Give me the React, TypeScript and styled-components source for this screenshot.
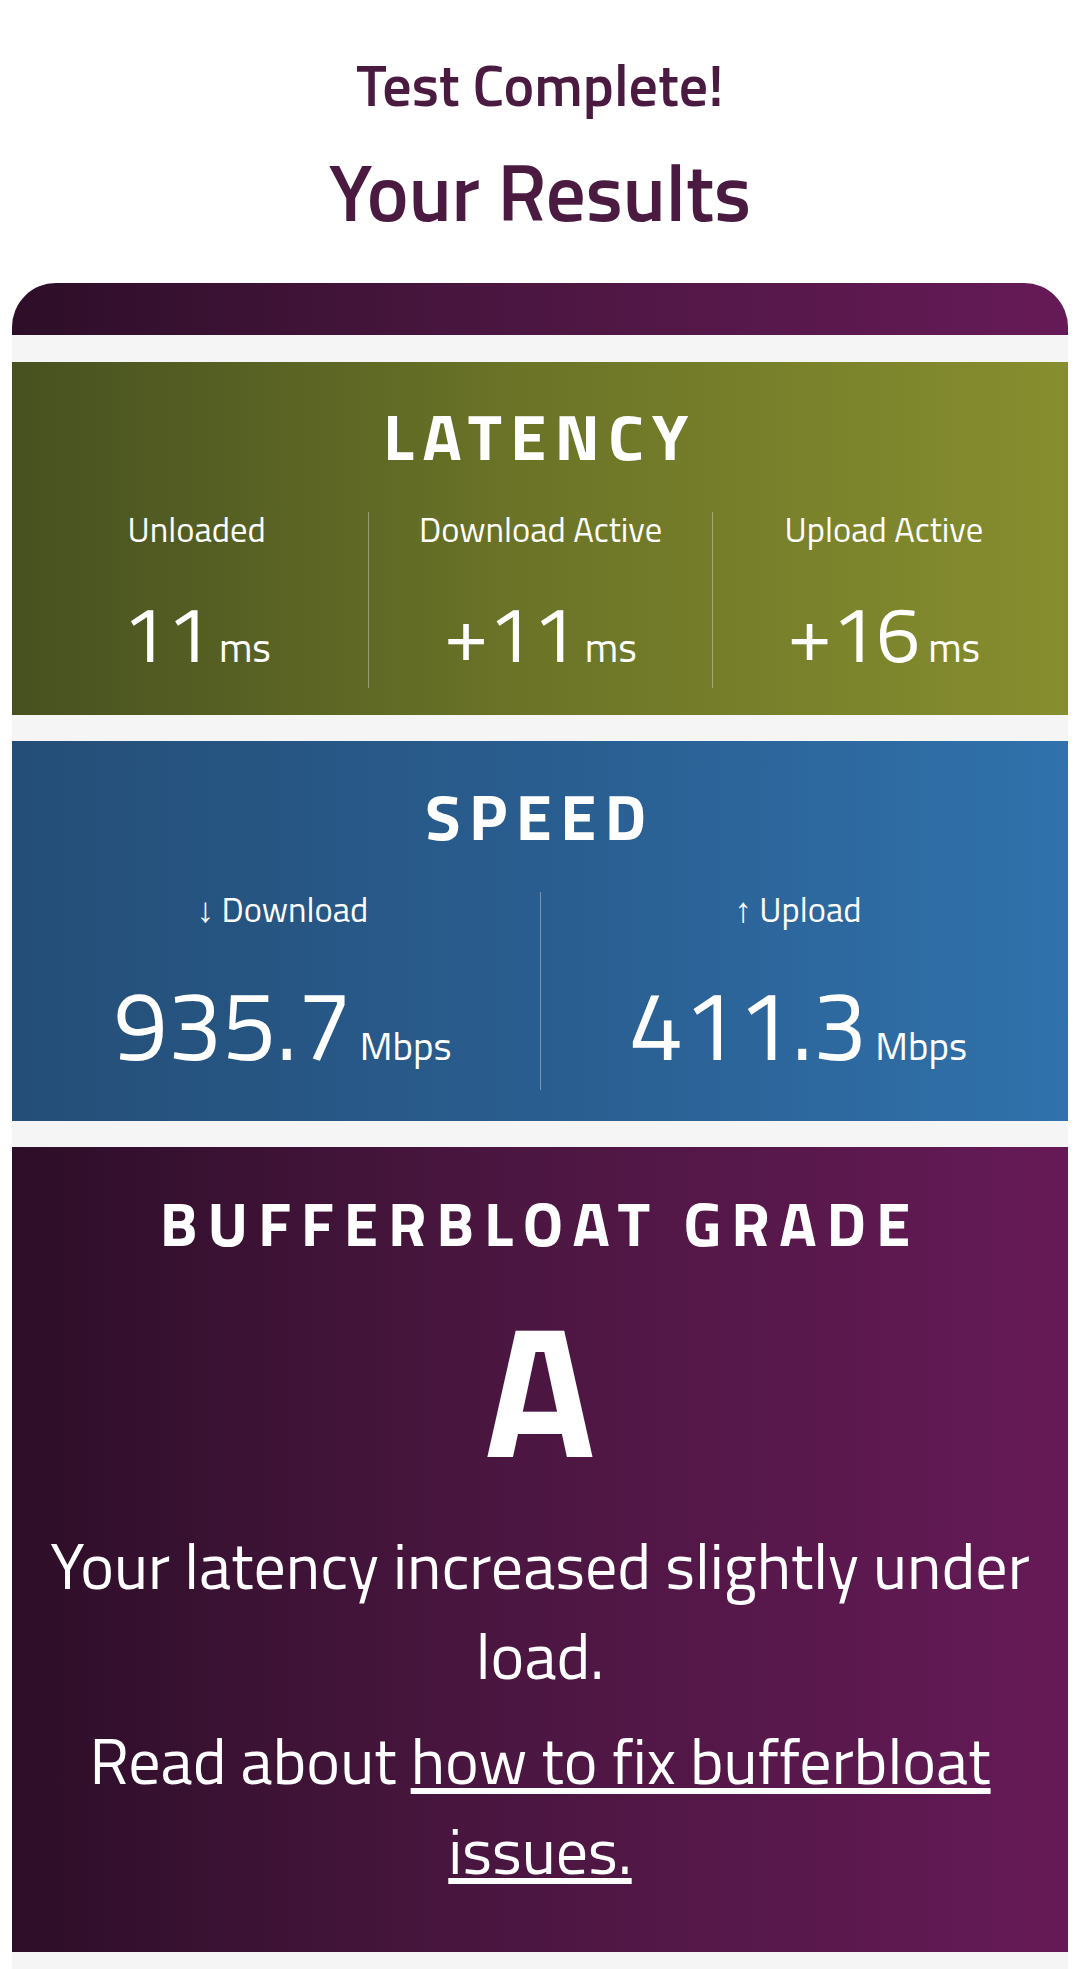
import styled, { createGlobalStyle } from "styled-components";

const Global = createGlobalStyle`
  body {
    margin: 0;
    background: #fff;
    font-family: "Titillium Web", "Open Sans", sans-serif;
    color: #fff;
  }
`;

const tones = {
  grape: "linear-gradient(90deg, #2d0e28 0%, #4a1640 45%, #661a57 100%)",
  olive: "linear-gradient(90deg, #475120 0%, #6c7527 50%, #878e2f 100%)",
  ocean: "linear-gradient(90deg, #244e77 0%, #2a5f92 55%, #3072ac 100%)",
};

type Tone = keyof typeof tones;

const Page = styled.main`
  padding: 56px 12px 0;
`;

const Kicker = styled.h2`
  margin: 0;
  text-align: center;
  color: #4a1a40;
  font-size: 58px;
  font-weight: 600;
  line-height: 1;
`;

const Title = styled.h1`
  margin: 38px 0 0;
  text-align: center;
  color: #4a1a40;
  font-size: 79px;
  font-weight: 600;
  line-height: 1;
`;

const Card = styled.div`
  margin-top: 52px;
  background: #f5f5f5;
  border-radius: 44px 44px 0 0;
  overflow: hidden;
  padding-bottom: 30px;
  display: flex;
  flex-direction: column;
  gap: 26px;
`;

const TopBar = styled.div`
  height: 52px;
  background: ${tones.grape};
  margin-bottom: 1px;
`;

const Section = styled.section<{ $tone: Tone; $top?: number; $bottom?: number }>`
  background: ${(p) => tones[p.$tone]};
  padding: ${(p) => p.$top ?? 41}px 13px ${(p) => p.$bottom ?? 27}px;
  text-align: center;
`;

const SectionTitle = styled.h3<{ $size?: number; $track?: number }>`
  margin: 0;
  font-size: ${(p) => p.$size ?? 65}px;
  font-weight: 700;
  line-height: 1;
  letter-spacing: ${(p) => p.$track ?? 0.13}em;
  text-transform: uppercase;
`;

const Stats = styled.div<{ $cols: number }>`
  display: grid;
  grid-template-columns: repeat(${(p) => p.$cols}, 1fr);
  margin-top: 44px;
`;

const Stat = styled.div`
  padding-bottom: 8px;
  & + & {
    border-left: 1px solid rgba(255, 255, 255, 0.35);
  }
`;

const StatLabel = styled.div`
  font-size: 34.5px;
  line-height: 1;
`;

const StatValue = styled.div<{ $size: number }>`
  margin-top: 39px;
  font-size: ${(p) => p.$size}px;
  line-height: 1.2;
  white-space: nowrap;
`;

const Unit = styled.span<{ $size: number }>`
  font-size: ${(p) => p.$size}px;
  margin-left: 8px;
`;

const Grade = styled.div`
  margin-top: 42px;
  font-size: 185px;
  font-weight: 700;
  line-height: 1;
`;

const Note = styled.p`
  margin: 0;
  padding: 0 8px;
  font-size: 64px;
  line-height: 90px;
  & + & {
    margin-top: 15px;
  }
`;

const Lead = styled(Note)`
  margin-top: 39px;
`;

const FixLink = styled.a`
  color: #fff;
  text-decoration: underline;
  text-decoration-thickness: 6px;
  text-underline-offset: 4px;
`;

const latency = [
  { label: "Unloaded", value: "11" },
  { label: "Download Active", value: "+11" },
  { label: "Upload Active", value: "+16" },
];

const speed = [
  { label: "↓ Download", value: "935.7" },
  { label: "↑ Upload", value: "411.3" },
];

export default function App() {
  return (
    <>
      <Global />
      <Page>
        <Kicker>Test Complete!</Kicker>
        <Title>Your Results</Title>
        <Card>
          <TopBar />
          <Section $tone="olive">
            <SectionTitle>Latency</SectionTitle>
            <Stats $cols={3}>
              {latency.map((s) => (
                <Stat key={s.label}>
                  <StatLabel>{s.label}</StatLabel>
                  <StatValue $size={79}>
                    {s.value}
                    <Unit $size={40}>ms</Unit>
                  </StatValue>
                </Stat>
              ))}
            </Stats>
          </Section>
          <Section $tone="ocean" $top={42} $bottom={31}>
            <SectionTitle>Speed</SectionTitle>
            <Stats $cols={2}>
              {speed.map((s) => (
                <Stat key={s.label}>
                  <StatLabel>{s.label}</StatLabel>
                  <StatValue $size={97}>
                    {s.value}
                    <Unit $size={39}>Mbps</Unit>
                  </StatValue>
                </Stat>
              ))}
            </Stats>
          </Section>
          <Section $tone="grape" $top={45} $bottom={57}>
            <SectionTitle $size={62} $track={0.16}>
              Bufferbloat Grade
            </SectionTitle>
            <Grade>A</Grade>
            <Lead>Your latency increased slightly under load.</Lead>
            <Note>
              Read about <FixLink href="#">how to fix bufferbloat issues.</FixLink>
            </Note>
          </Section>
        </Card>
      </Page>
    </>
  );
}
